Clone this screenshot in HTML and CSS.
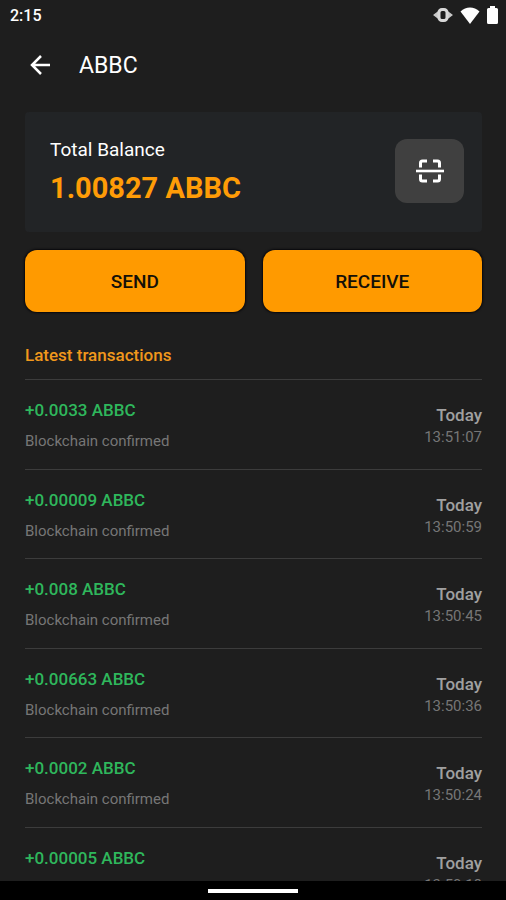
FILE: index.html
```html
<!DOCTYPE html>
<html lang="en">
<head>
    <meta charset="UTF-8">
    <meta name="viewport" content="width=device-width, initial-scale=1.0">
    <title>ABBC Wallet</title>
    <link rel="stylesheet" href="styles.css">
</head>
<body>
    <div class="status-bar">
        <span class="clock">2:15</span>
        <div class="status-icons">
            <svg width="20" height="14" viewBox="0 0 20 14">
                <path d="M0 7L6 2.500V11.500Z M20 7L14 2.500V11.500Z" fill="#c8c8c8"/>
                <rect x="6" y="1.500" width="8" height="11" rx="3" fill="none" stroke="#d8d8d8" stroke-width="3"/>
            </svg>
            <svg width="20" height="17" viewBox="0 0 20 17">
                <path d="M10 17L0.5 4.5C6 -0.8 14 -0.8 19.5 4.5Z" fill="#fff"/>
            </svg>
            <svg width="11" height="18" viewBox="0 0 11 18">
                <path d="M3 0H8V2H9.5Q11 2 11 3.5V16.5Q11 18 9.5 18H1.5Q0 18 0 16.5V3.5Q0 2 1.5 2H3Z" fill="#fff"/>
            </svg>
        </div>
    </div>

    <header class="app-bar">
        <button class="back" aria-label="Back">
            <svg width="20" height="20" viewBox="0 0 20 20" fill="none" stroke="#fff" stroke-width="2.5">
                <path d="M20 10H2M11 1L2 10L11 19"/>
            </svg>
        </button>
        <h1>ABBC</h1>
    </header>

    <main>
        <section class="balance-card">
            <div>
                <div class="balance-label">Total Balance</div>
                <div class="balance-value">1.00827 ABBC</div>
            </div>
            <button class="scan" aria-label="Scan code">
                <svg width="28" height="24" viewBox="0 0 28 24" fill="none" stroke="#fff" stroke-width="3">
                    <path d="M0 12H28" stroke-width="2.6"/>
                    <path d="M4.5 8.5V4Q4.5 2 6.5 2H11M17 2H21.5Q23.5 2 23.5 4V8.5M23.5 15.5V20Q23.5 22 21.5 22H17M11 22H6.5Q4.5 22 4.5 20V15.5"/>
                </svg>
            </button>
        </section>

        <div class="actions">
            <button class="action">SEND</button>
            <button class="action">RECEIVE</button>
        </div>

        <h2>Latest transactions</h2>
        <ul class="transactions">
            <li>
                <div><div class="amount">+0.0033 ABBC</div><div class="state">Blockchain confirmed</div></div>
                <div class="when"><div class="day">Today</div><div class="time">13:51:07</div></div>
            </li>
            <li>
                <div><div class="amount">+0.00009 ABBC</div><div class="state">Blockchain confirmed</div></div>
                <div class="when"><div class="day">Today</div><div class="time">13:50:59</div></div>
            </li>
            <li>
                <div><div class="amount">+0.008 ABBC</div><div class="state">Blockchain confirmed</div></div>
                <div class="when"><div class="day">Today</div><div class="time">13:50:45</div></div>
            </li>
            <li>
                <div><div class="amount">+0.00663 ABBC</div><div class="state">Blockchain confirmed</div></div>
                <div class="when"><div class="day">Today</div><div class="time">13:50:36</div></div>
            </li>
            <li>
                <div><div class="amount">+0.0002 ABBC</div><div class="state">Blockchain confirmed</div></div>
                <div class="when"><div class="day">Today</div><div class="time">13:50:24</div></div>
            </li>
            <li>
                <div><div class="amount">+0.00005 ABBC</div></div>
                <div class="when"><div class="day">Today</div><div class="time">13:50:18</div></div>
            </li>
        </ul>
    </main>

    <div class="nav-bar"><div class="nav-handle"></div></div>
</body>
</html>
```
FILE: styles.css
```css
* {
    box-sizing: border-box;
}
body {
    margin: 0;
    height: 100vh;
    display: flex;
    flex-direction: column;
    background-color: #1e1e1e;
    color: #fff;
    font-family: Roboto, sans-serif;
}
button {
    border: none;
    padding: 0;
    font-family: inherit;
    cursor: pointer;
}
svg {
    display: block;
}
.status-bar {
    display: flex;
    flex-shrink: 0;
    justify-content: space-between;
    align-items: center;
    height: 30px;
    padding: 0 8px 0 10px;
}
.clock {
    font-size: 16px;
    font-weight: 500;
}
.status-icons {
    display: flex;
    align-items: center;
    gap: 7px;
}
.app-bar {
    display: flex;
    flex-shrink: 0;
    align-items: center;
    gap: 29px;
    height: 70px;
    padding: 0 30px;
}
.back {
    background: none;
}
h1 {
    margin: 0;
    font-size: 23px;
    font-weight: 400;
}
main {
    flex: 1;
    min-height: 0;
    overflow: hidden;
    padding: 12px 24px 0 25px;
}
.balance-card {
    display: flex;
    justify-content: space-between;
    align-items: center;
    height: 120px;
    padding: 0 18px 2px 25px;
    border-radius: 4px;
    background-color: #222426;
}
.balance-label {
    font-size: 19px;
    line-height: 24px;
}
.balance-value {
    margin-top: 10px;
    font-size: 29px;
    line-height: 32px;
    font-weight: 700;
    color: #ff9c07;
}
.scan {
    display: flex;
    justify-content: center;
    align-items: center;
    width: 69px;
    height: 64px;
    border-radius: 12px;
    background-color: #404040;
}
.actions {
    display: grid;
    grid-template-columns: 1fr 1fr;
    gap: 18px;
    margin-top: 18px;
}
.action {
    height: 62px;
    border-radius: 12px;
    background-color: #ff9a00;
    box-shadow: 0 0 2px 1px #08080c;
    color: #141008;
    font-size: 19px;
    font-weight: 500;
}
h2 {
    margin: 32px 0 13px;
    font-size: 17px;
    line-height: 22px;
    font-weight: 500;
    color: #f0981c;
}
.transactions {
    list-style: none;
    margin: 0;
    padding: 0;
}
.transactions li {
    display: flex;
    justify-content: space-between;
    height: 90px;
    padding-top: 19px;
    border-top: 1px solid #3c3c3c;
}
.transactions li:nth-child(even) {
    height: 89px;
}
.amount {
    margin-bottom: 10px;
    font-size: 17px;
    line-height: 22px;
    font-weight: 500;
    color: #2fb75c;
}
.state {
    font-size: 15px;
    line-height: 20px;
    color: #767676;
}
.when {
    padding-top: 5px;
    text-align: right;
}
.day {
    font-size: 17px;
    line-height: 22px;
    font-weight: 500;
    color: #a0a0a0;
}
.time {
    font-size: 15px;
    line-height: 22px;
    color: #767676;
}
.nav-bar {
    display: flex;
    flex-shrink: 0;
    justify-content: center;
    align-items: center;
    height: 19px;
    background-color: #000;
}
.nav-handle {
    width: 90px;
    height: 4px;
    background-color: #fff;
}
```
